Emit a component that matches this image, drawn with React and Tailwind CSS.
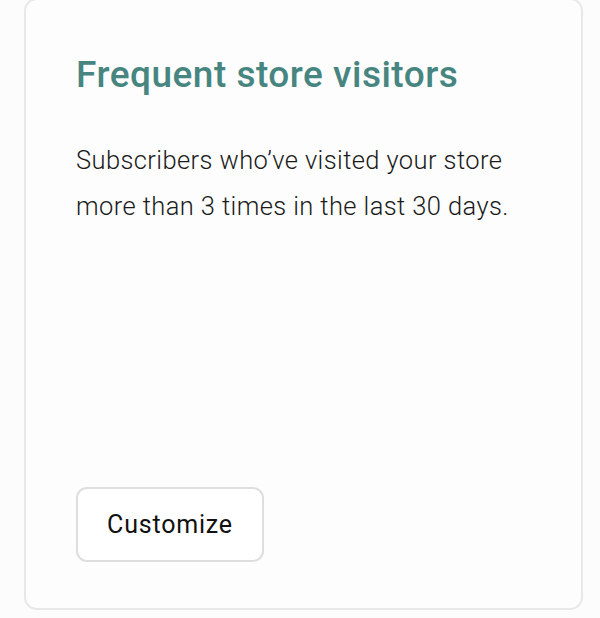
import React from "react";

export default function App() {
  return (
    <div className="w-[600px] h-[618px] overflow-hidden bg-[#fcfcfc] font-['Roboto',sans-serif]">
      {/* Card */}
      <div className="ml-[24px] w-[559px] mt-[-2px] h-[612px] flex flex-col rounded-[13px] border-2 border-[#e8e8e8] bg-[#fdfdfd] pl-[50px] pr-6 pb-[46px]">
        <h2 className="mt-[55px] text-[37px] leading-[40px] font-medium text-[#478680] tracking-[0.5px]">
          Frequent store visitors
        </h2>
        <p className="mt-[42px] text-[25.5px] leading-[46px] font-light text-[#1a1a1a] tracking-[0.4px]">
          Subscribers who’ve visited your store
          <br />
          more than 3 times in the last 30 days.
        </p>

        <div className="mt-auto">
          <button className="w-[188px] h-[75px] rounded-[11px] border-2 border-[#dedede] bg-white text-[25px] text-[#111] font-normal tracking-[0.8px]">
            Customize
          </button>
        </div>
      </div>
    </div>
  );
}
